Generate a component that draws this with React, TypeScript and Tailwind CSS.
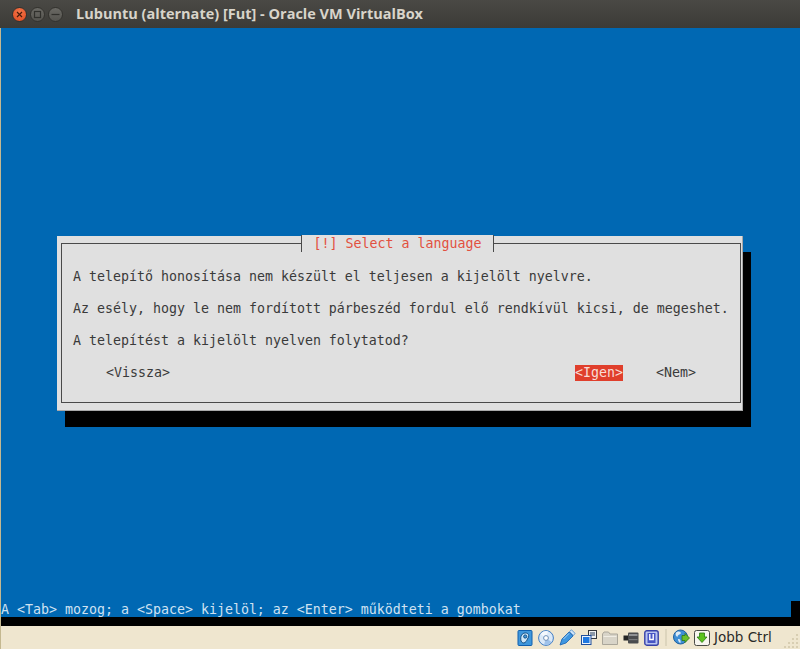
const mono = "font-['DejaVu_Sans_Mono','Liberation_Mono',monospace] text-[13.29px] leading-4 whitespace-pre";

function WindowButton({ kind }: { kind: 'close' | 'max' | 'min' }) {
    const bg = kind === 'close' ? 'bg-[radial-gradient(circle_at_50%_30%,#f4764a,#e2491f)]' : 'bg-[linear-gradient(#6a6964,#55544f)]';
    return (
        <div className={`flex h-[15px] w-[15px] items-center justify-center rounded-full border border-[#33322e] ${bg}`}>
            <svg width="9" height="9" viewBox="0 0 9 9" fill="none" stroke={kind === 'close' ? '#4a1c0c' : '#30302c'} strokeWidth="1.2">
                {kind === 'close' && <path d="M2 2L7 7M7 2L2 7" />}
                {kind === 'max' && <rect x="1.5" y="1.5" width="6" height="6" />}
                {kind === 'min' && <path d="M0.5 4.5H8.5" />}
            </svg>
        </div>
    );
}

function HdIcon() {
    return (
        <svg width="16" height="16" viewBox="0 0 16 16">
            <rect x="1" y="0.5" width="14" height="15" rx="1" fill="#3f97dc" stroke="#0f5fae" />
            <path d="M4 11C3 6 5 3 8.5 3C11.5 3 12.5 5.5 11 8C10 9.5 10 11 8 12.5C6.5 13.5 5 13 4 11Z" fill="#cfe6f7" stroke="#124f86" />
            <circle cx="8.2" cy="6.5" r="1.6" fill="#3f97dc" stroke="#124f86" />
        </svg>
    );
}

function CdIcon() {
    return (
        <svg width="16" height="16" viewBox="0 0 16 16">
            <circle cx="8" cy="8" r="7.4" fill="#dbe9f8" stroke="#3f7cc4" />
            <path d="M8 8L2.5 4A7 7 0 0 1 10 1.3Z" fill="#f4f8fd" />
            <path d="M8 8L13.5 12A7 7 0 0 1 6 14.7Z" fill="#9fc2ea" />
            <circle cx="8" cy="8" r="2.4" fill="#fff" stroke="#6d8fb8" />
        </svg>
    );
}

function UsbIcon() {
    return (
        <svg width="17" height="17" viewBox="0 0 17 17">
            <path d="M1 16L3 10L10 3L14 7L7 14Z" fill="#3f97e0" stroke="#1560b0" strokeWidth="0.8" />
            <path d="M10.5 2.5L12.5 0.8L16 4.3L14.5 6.5Z" fill="#cfe4f7" stroke="#4b8ccb" strokeWidth="0.8" />
            <path d="M4.5 10L10 4.5" stroke="#a9d4f5" />
        </svg>
    );
}

function NetworkIcon() {
    return (
        <svg width="16" height="16" viewBox="0 0 16 16">
            <rect x="7.5" y="0.5" width="8" height="8" fill="#eef0f2" stroke="#33373d" />
            <rect x="9" y="2" width="5" height="4" fill="#8b98a8" />
            <rect x="0.5" y="5.5" width="9.5" height="9" fill="#eef4fb" stroke="#1f4f9c" />
            <rect x="2" y="7" width="6.5" height="6" fill="#1f78e0" />
        </svg>
    );
}

function FolderIcon() {
    return (
        <svg width="16" height="14" viewBox="0 0 16 14">
            <path d="M0.5 3V13.5H15.5V3H8L6.5 1H2Z" fill="#d8d4c8" stroke="#aaa69a" />
            <path d="M1.5 5.5H14.5" stroke="#f0ede4" />
        </svg>
    );
}

function CameraIcon() {
    return (
        <svg width="16" height="12" viewBox="0 0 16 12">
            <rect x="5" y="0.5" width="10.5" height="11" rx="1" fill="#4a4c4e" />
            <rect x="6" y="2" width="8.5" height="2" fill="#8f9193" />
            <rect x="6" y="7" width="8.5" height="1.2" fill="#77797b" />
            <path d="M0.5 3.5H5V8.5H0.5Z" fill="#232425" />
        </svg>
    );
}

function ShieldIcon() {
    return (
        <svg width="15" height="16" viewBox="0 0 15 16">
            <rect x="0.8" y="0.8" width="13.4" height="14.4" rx="2" fill="#b9c4f0" stroke="#3540a8" strokeWidth="1.4" />
            <rect x="3.5" y="3" width="8" height="10" fill="#4755c4" />
            <path d="M5.8 4V9.5H9.2V4" fill="none" stroke="#fff" strokeWidth="1.4" />
        </svg>
    );
}

function GlobeIcon() {
    return (
        <svg width="17" height="17" viewBox="0 0 17 17">
            <circle cx="7.5" cy="8" r="7" fill="#3f8fd6" stroke="#1d5f9e" />
            <path d="M3 3.5C5 2 7 2.5 8 4C7 6 4.5 5.5 4.5 8C3 7.5 2 5.5 3 3.5ZM5 10C7 9.5 8 11 7.5 14C6 13.5 5 12 5 10Z" fill="#dceaf5" />
            <path d="M9 6.5L12 6.5L12 4.5L16.5 9L12 13.5L12 11.5L9 11.5Z" fill="#6cc02c" stroke="#2f7a12" strokeWidth="0.8" />
        </svg>
    );
}

function DownloadIcon() {
    return (
        <svg width="16" height="16" viewBox="0 0 16 16">
            <rect x="0.5" y="0.5" width="15" height="15" rx="2" fill="#f7f5ef" stroke="#4a4a46" />
            <path d="M5.5 3H10.5V7H13L8 12.5L3 7H5.5Z" fill="#5cc21e" stroke="#2a7a10" strokeWidth="0.8" />
        </svg>
    );
}

function ResizeGrip() {
    return (
        <svg width="18" height="18" viewBox="0 0 18 18" fill="#d8ceb2">
            <rect x="14" y="3" width="2" height="2" />
            <rect x="10" y="7" width="2" height="2" />
            <rect x="14" y="7" width="2" height="2" />
            <rect x="6" y="11" width="2" height="2" />
            <rect x="10" y="11" width="2" height="2" />
            <rect x="14" y="11" width="2" height="2" />
            <rect x="2" y="15" width="2" height="2" />
            <rect x="6" y="15" width="2" height="2" />
            <rect x="10" y="15" width="2" height="2" />
            <rect x="14" y="15" width="2" height="2" />
        </svg>
    );
}

export default function App() {
    return (
        <div className="flex h-[649px] w-[800px] flex-col overflow-hidden bg-[#efe6cf]">
            {/* 창 제목 표시줄 */}
            <header className="flex h-[28px] shrink-0 items-center bg-[linear-gradient(#4a4945,#3c3b37)] pl-[12px]">
                <div className="flex gap-[3px]">
                    <WindowButton kind="close" />
                    <WindowButton kind="max" />
                    <WindowButton kind="min" />
                </div>
                <span className="ml-[13px] font-['Open_Sans',sans-serif] text-[14.5px] font-bold text-[#d8d4ca]">
                    Lubuntu (alternate) [Fut] - Oracle VM VirtualBox
                </span>
            </header>

            <div className="flex min-h-0 flex-1 flex-col border-l border-[#c4b890]">
                <main className="flex min-h-0 flex-1 flex-col bg-[#0068b3] pl-[56px] pt-[208px]">
                    <section className="h-[175px] w-[686px] border-b border-r border-[#a8a8a8] bg-[#e0e0e0] pl-[4px] pt-[7px] text-[#3a3a3a] shadow-[8px_16px_0_#000]">
                        <div className="relative h-[160px] w-[680px] border border-[#4a4a4a] pl-[11px] pt-[25px]">
                            <div className={`absolute -top-[9px] left-[239px] flex h-[17px] w-[193px] items-center justify-center border-x border-[#4a4a4a] bg-[#e0e0e0] pt-px text-[#e2503f] ${mono}`}>
                                [!] Select a language
                            </div>
                            <div className={`flex flex-col gap-4 ${mono}`}>
                                <p>A telepítő honosítása nem készült el teljesen a kijelölt nyelvre.</p>
                                <p>Az esély, hogy le nem fordított párbeszéd fordul elő rendkívül kicsi, de megeshet.</p>
                                <p>A telepítést a kijelölt nyelven folytatod?</p>
                                <div className="flex pl-[33px]">
                                    <span>&lt;Vissza&gt;</span>
                                    <span className="ml-[405px] bg-[#e03f2c] text-[#f8dcd6]">&lt;Igen&gt;</span>
                                    <span className="ml-[33px]">&lt;Nem&gt;</span>
                                </div>
                            </div>
                        </div>
                    </section>
                    {/* 하단 안내 줄 */}
                    <div className="mt-auto -ml-[56px] flex h-[16px] justify-between text-[#cfe2f2]">
                        <span className={`${mono} pt-px`}>A &lt;Tab&gt; mozog; a &lt;Space&gt; kijelöl; az &lt;Enter&gt; működteti a gombokat</span>
                        <span className="w-[9px] bg-black" />
                    </div>
                </main>
                <div className="h-[9px] shrink-0 bg-black" />

                {/* VirtualBox 상태 표시줄 */}
                <footer className="flex h-[23px] shrink-0 items-center pl-[516px] text-[#2a2a28]">
                    <div className="flex w-[142px] items-center justify-between">
                        <HdIcon />
                        <CdIcon />
                        <UsbIcon />
                        <NetworkIcon />
                        <FolderIcon />
                        <CameraIcon />
                        <ShieldIcon />
                    </div>
                    <div className="mx-[6px] h-[17px] w-[2px] bg-[#ddd5bd]" />
                    <div className="flex w-[37px] items-center justify-between">
                        <GlobeIcon />
                        <DownloadIcon />
                    </div>
                    <span className="ml-[4px] font-['DejaVu_Sans',sans-serif] text-[13.5px]">Jobb Ctrl</span>
                    <div className="ml-auto self-end">
                        <ResizeGrip />
                    </div>
                </footer>
            </div>
        </div>
    );
}
